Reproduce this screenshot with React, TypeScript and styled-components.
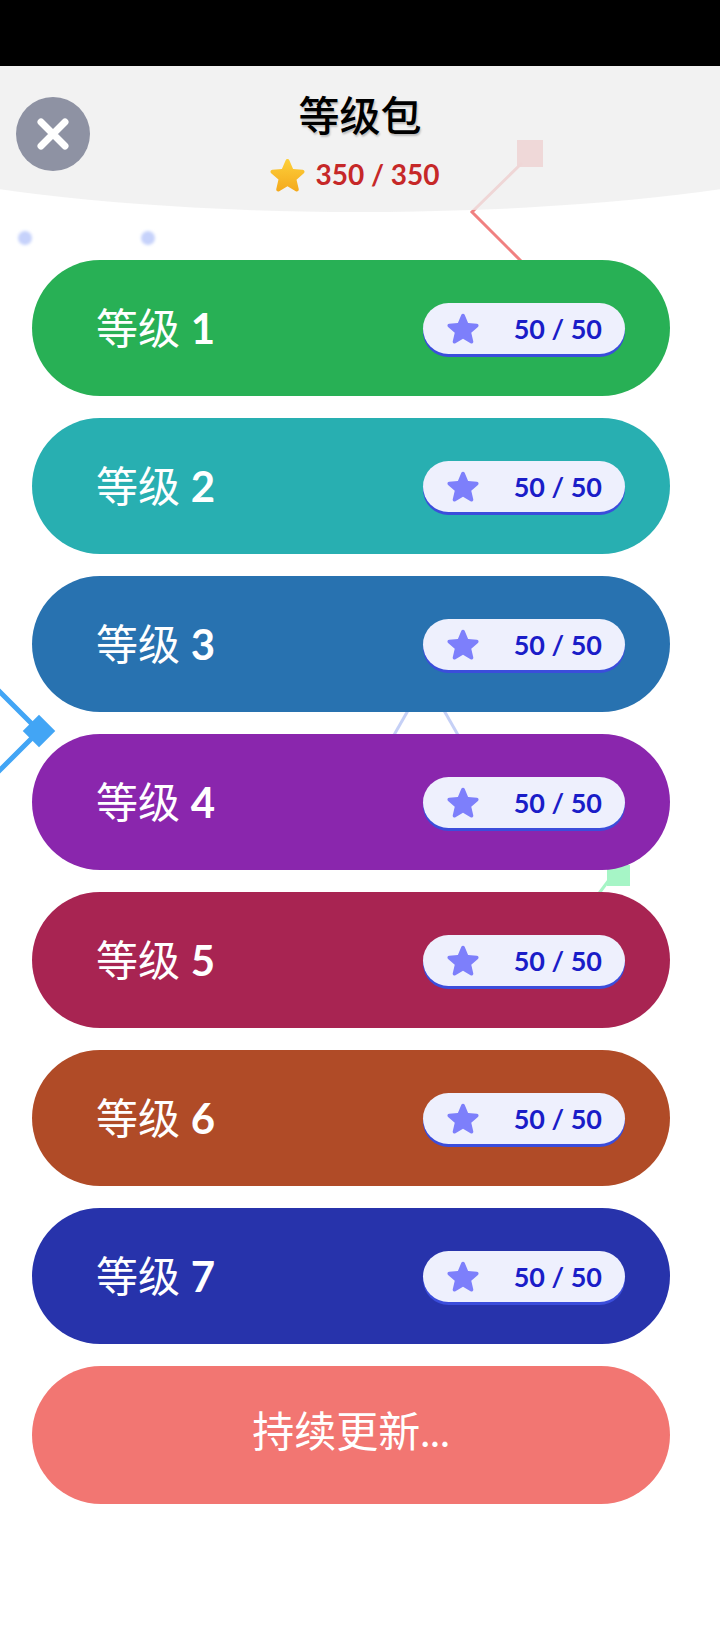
import React from "react";
import styled, { createGlobalStyle } from "styled-components";

const GlobalStyle = createGlobalStyle`
  html, body { margin: 0; padding: 0; background: #ffffff; }
  body { font-family: Lato, "Noto Sans CJK SC", sans-serif; overflow-x: hidden; }
  * { box-sizing: border-box; }
`;

const Page = styled.div`
  position: relative;
  width: 720px;
  min-height: 1640px;
  background: #ffffff;
  overflow: hidden;
`;

const StatusBar = styled.div`
  position: relative;
  z-index: 2;
  height: 66px;
  background: #000000;
`;

const Backdrop = styled.svg`
  position: absolute;
  top: 0;
  left: 0;
  width: 720px;
  height: 1640px;
  z-index: 0;
  pointer-events: none;
`;

const Header = styled.header`
  position: relative;
  z-index: 1;
  height: 146px;
  display: grid;
  grid-template-columns: 74px 1fr 74px;
  padding: 0 16px;
  &::before {
    content: "";
    position: absolute;
    top: 0;
    left: -216px;
    width: 1152px;
    height: 100%;
    background: rgba(238, 238, 238, 0.78);
    border-radius: 0 0 576px 576px / 0 0 104px 104px;
    z-index: -1;
  }
`;

const CloseButton = styled.button`
  width: 74px;
  height: 74px;
  margin-top: 31px;
  border: none;
  border-radius: 50%;
  background: #8e92a3;
  display: grid;
  place-items: center;
  padding: 0;
  cursor: pointer;
`;

const TitleBlock = styled.div`
  display: flex;
  flex-direction: column;
  align-items: center;
  padding-top: 22px;
`;

const Title = styled.h1`
  margin: 0;
  font-family: "Noto Sans CJK SC", sans-serif;
  font-size: 41px;
  line-height: 50px;
  font-weight: 500;
  color: #000000;
  text-shadow: 1px 2px 2px rgba(0, 0, 0, 0.22);
`;

const Score = styled.div`
  display: flex;
  align-items: center;
  gap: 10px;
  height: 36px;
  margin-top: 18px;
  margin-left: -10px;
  font-family: Lato, sans-serif;
  font-size: 28px;
  font-weight: 700;
  color: #c62828;
`;

const List = styled.main`
  position: relative;
  z-index: 1;
  display: flex;
  flex-direction: column;
  gap: 22px;
  padding: 48px 50px 0 32px;
`;

const LevelCard = styled.div<{ $color: string }>`
  height: 136px;
  border-radius: 68px;
  background: ${(p) => p.$color};
  display: flex;
  align-items: center;
  justify-content: space-between;
  padding: 0 45px 0 64px;
`;

const Label = styled.span`
  margin-bottom: 1px;
  color: #ffffff;
  font-family: Lato, "Noto Sans CJK SC", sans-serif;
  font-size: 42px;
  font-weight: 400;
  line-height: 1;
`;

const LevelNumber = styled.span`
  font-weight: 700;
`;

const Badge = styled.div`
  width: 202px;
  height: 51px;
  border-radius: 26px;
  background: #eef0fd;
  box-shadow: 0 3px 0 #3b4ddb;
  display: flex;
  align-items: center;
  justify-content: space-between;
  padding: 0 23px 0 24px;
`;

const BadgeText = styled.span`
  font-family: Lato, sans-serif;
  font-size: 27px;
  font-weight: 700;
  color: #1a1dc8;
`;

const MoreButton = styled.div`
  height: 138px;
  border-radius: 69px;
  background: #f27672;
  color: #ffffff;
  display: flex;
  align-items: center;
  justify-content: center;
  padding-bottom: 8px;
  font-family: Lato, "Noto Sans CJK SC", sans-serif;
  font-size: 42px;
  font-weight: 400;
  line-height: 1;
`;

const STAR_PATH =
  "M12 17.27l4.15 2.51c.76.46 1.69-.22 1.49-1.08l-1.1-4.72 3.67-3.18c.67-.58.31-1.68-.57-1.75l-4.83-.41-1.89-4.46c-.34-.81-1.5-.81-1.84 0L9.19 8.63l-4.83.41c-.88.07-1.24 1.17-.57 1.75l3.67 3.18-1.1 4.72c-.2.86.73 1.54 1.49 1.08l4.15-2.5z";

const BadgeStar = () => (
  <svg width="32" height="32" viewBox="3.2 2.6 17.6 17.6">
    <path d={STAR_PATH} fill="#7d7ffb" />
  </svg>
);

const GoldStar = () => (
  <svg width="35" height="35" viewBox="3.2 2.6 17.6 17.6">
    <defs>
      <linearGradient id="gold" x1="0" y1="0" x2="0" y2="1">
        <stop offset="0" stopColor="#fdd03a" />
        <stop offset="1" stopColor="#f4a91c" />
      </linearGradient>
    </defs>
    <path d={STAR_PATH} fill="url(#gold)" />
  </svg>
);

const CloseIcon = () => (
  <svg width="34" height="34" viewBox="0 0 34 34">
    <path
      d="M5 5 L29 29 M29 5 L5 29"
      stroke="#ffffff"
      strokeWidth="7"
      strokeLinecap="round"
    />
  </svg>
);

const levels = [
  { n: 1, color: "#28b055" },
  { n: 2, color: "#28afb1" },
  { n: 3, color: "#2872b0" },
  { n: 4, color: "#8a26ad" },
  { n: 5, color: "#a82452" },
  { n: 6, color: "#b04b27" },
  { n: 7, color: "#2733ab" },
];

export default function App() {
  return (
    <>
      <GlobalStyle />
      <Page>
        <Backdrop viewBox="0 0 720 1640">
          <defs>
            <filter id="soft" x="-50%" y="-50%" width="200%" height="200%">
              <feGaussianBlur stdDeviation="1.5" />
            </filter>
          </defs>
          <rect x="517" y="140" width="26" height="27" fill="#f08a8a" />
          <polyline
            points="522,163 472,212 522,262"
            fill="none"
            stroke="#f08080"
            strokeWidth="3"
          />
          <circle cx="25" cy="238" r="7" fill="#c6d2fb" filter="url(#soft)" />
          <circle cx="148" cy="238" r="7" fill="#c6d2fb" filter="url(#soft)" />
          <polyline
            points="-6,686 39,731 -6,776"
            fill="none"
            stroke="#42a5f5"
            strokeWidth="5"
          />
          <rect
            x="27.5"
            y="719.5"
            width="23"
            height="23"
            fill="#42a5f5"
            transform="rotate(45 39 731)"
          />
          <line x1="414" y1="700" x2="390" y2="742" stroke="#c5d0f6" strokeWidth="3" />
          <line x1="438" y1="700" x2="462" y2="742" stroke="#c5d0f6" strokeWidth="3" />
          <rect x="607" y="865" width="23" height="21" fill="#a6f5c6" />
          <line x1="609" y1="880" x2="594" y2="900" stroke="#a6f5c6" strokeWidth="3" />
        </Backdrop>
        <StatusBar />
        <Header>
          <CloseButton aria-label="close">
            <CloseIcon />
          </CloseButton>
          <TitleBlock>
            <Title>等级包</Title>
            <Score>
              <GoldStar />
              <span>350 / 350</span>
            </Score>
          </TitleBlock>
          <div />
        </Header>
        <List>
          {levels.map((l) => (
            <LevelCard key={l.n} $color={l.color}>
              <Label>
                等级 <LevelNumber>{l.n}</LevelNumber>
              </Label>
              <Badge>
                <BadgeStar />
                <BadgeText>50 / 50</BadgeText>
              </Badge>
            </LevelCard>
          ))}
          <MoreButton>持续更新...</MoreButton>
        </List>
      </Page>
    </>
  );
}
